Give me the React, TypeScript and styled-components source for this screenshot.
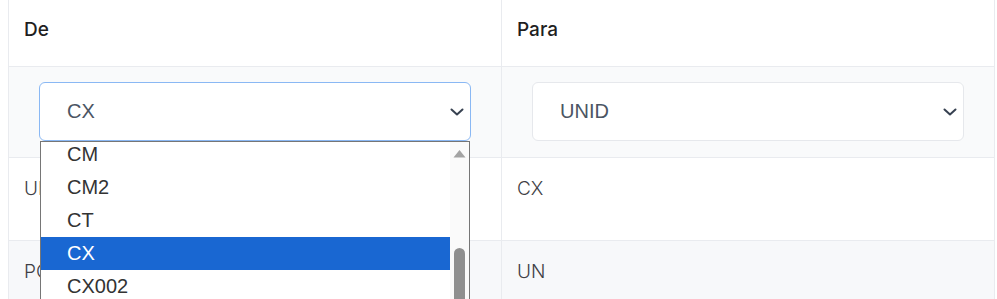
import React from "react";
import styled, { createGlobalStyle } from "styled-components";

const Global = createGlobalStyle`
  html, body { margin: 0; padding: 0; background: #ffffff; }
  body { padding: 0 3px 0 8px; overflow: hidden; font-family: Inter, "Noto Sans", sans-serif; }
`;

const Table = styled.div`
  display: grid;
  grid-template-columns: 492px 493px;
  border-left: 1px solid #e9ebef;
  border-right: 1px solid #e9ebef;
  width: 987px;
  box-sizing: border-box;
`;

const Cell = styled.div<{ $bg?: string; $h: number; $first?: boolean }>`
  position: relative;
  box-sizing: border-box;
  height: ${(p) => p.$h}px;
  background: ${(p) => p.$bg || "#ffffff"};
  border-bottom: 1px solid #e9ebef;
  border-left: ${(p) => (p.$first ? "none" : "1px solid #e9ebef")};
`;

const HeadCell = styled(Cell)`
  padding: 18px 15px 0;
  font-size: 19px;
  line-height: 24px;
  font-weight: 500;
  color: #1f1f1f;
`;

const FilterCell = styled(Cell)`
  padding: 15px 30px 0;
`;

const DataCell = styled(Cell)`
  padding: 19px 15px 0;
  font-size: 19px;
  line-height: 24px;
  font-weight: 300;
  color: #3f3f46;
`;

const SelectBox = styled.div<{ $focused?: boolean }>`
  position: relative;
  box-sizing: border-box;
  height: 59px;
  border: 1px solid ${(p) => (p.$focused ? "#8ab8f4" : "#e6e8ec")};
  border-radius: 6px;
  background: #ffffff;
  display: flex;
  align-items: center;
  padding-left: 27px;
  font-family: "Liberation Sans", Arial, sans-serif;
  font-size: 20px;
  color: #4b5563;
`;

const Chevron = styled.svg`
  position: absolute;
  right: 6px;
  top: 50%;
  margin-top: -4px;
  width: 14px;
  height: 8px;
`;

const Dropdown = styled.div`
  position: absolute;
  left: 0;
  top: 58px;
  width: 430px;
  height: 170px;
  box-sizing: border-box;
  border: 1px solid #767676;
  border-bottom: none;
  background: #ffffff;
  display: flex;
  overflow: hidden;
  z-index: 5;
`;

const OptionList = styled.div`
  flex: 1;
  margin-top: -4px;
`;

const Option = styled.div<{ $selected?: boolean }>`
  height: 33px;
  line-height: 33px;
  padding-left: 26px;
  font-family: "Liberation Sans", Arial, sans-serif;
  font-size: 20px;
  color: ${(p) => (p.$selected ? "#ffffff" : "#333333")};
  background: ${(p) => (p.$selected ? "#1967d2" : "transparent")};
`;

const ScrollTrack = styled.div`
  position: relative;
  width: 19px;
  background: #fafafa;
`;

const ScrollArrow = styled.svg`
  position: absolute;
  left: 3px;
  top: 7px;
  width: 13px;
  height: 9px;
`;

const ScrollThumb = styled.div`
  position: absolute;
  left: 4px;
  top: 106px;
  width: 11px;
  height: 80px;
  border-radius: 6px 6px 0 0;
  background: #8f8f8f;
`;

const ChevronIcon = () => (
  <Chevron viewBox="0 0 14 8">
    <path d="M1.5 1.5 L7 6.5 L12.5 1.5" fill="none" stroke="#374151" strokeWidth="2" strokeLinecap="round" strokeLinejoin="round" />
  </Chevron>
);

const options = ["CM", "CM2", "CT", "CX", "CX002"];

export default function App() {
  return (
    <>
      <Global />
      <Table>
        <HeadCell $h={67} $first>De</HeadCell>
        <HeadCell $h={67}>Para</HeadCell>

        <FilterCell $h={91} $bg="#f9fafb" $first>
          <SelectBox $focused>
            CX
            <ChevronIcon />
            <Dropdown>
              <OptionList>
                {options.map((o) => (
                  <Option key={o} $selected={o === "CX"}>
                    {o}
                  </Option>
                ))}
              </OptionList>
              <ScrollTrack>
                <ScrollArrow viewBox="0 0 13 9">
                  <path d="M6.5 1 L12.5 8.5 L0.5 8.5 Z" fill="#a3a3a3" />
                </ScrollArrow>
                <ScrollThumb />
              </ScrollTrack>
            </Dropdown>
          </SelectBox>
        </FilterCell>
        <FilterCell $h={91} $bg="#f9fafb">
          <SelectBox>
            UNID
            <ChevronIcon />
          </SelectBox>
        </FilterCell>

        <DataCell $h={83} $first>UNID</DataCell>
        <DataCell $h={83}>CX</DataCell>

        <DataCell $h={83} $bg="#f7f8fa" $first>PCT</DataCell>
        <DataCell $h={83} $bg="#f7f8fa">UN</DataCell>
      </Table>
    </>
  );
}
